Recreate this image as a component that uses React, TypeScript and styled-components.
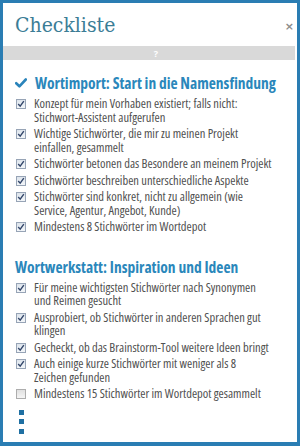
import React from "react";
import styled, { createGlobalStyle } from "styled-components";

const GlobalStyle = createGlobalStyle`
  html, body { margin: 0; padding: 0; background: #ffffff; }
  * { box-sizing: border-box; }
`;

const Frame = styled.div`
  width: 300px;
  height: 446px;
  border: 3px solid #2a7db3;
  border-bottom-width: 4px;
  background: #ffffff;
  display: flex;
  flex-direction: column;
  overflow: hidden;
`;

const Header = styled.header`
  height: 43px;
  display: flex;
  align-items: center;
  justify-content: space-between;
  padding: 0 3px 0 12px;
`;

const Title = styled.h1`
  margin: 0;
  font-family: "DejaVu Serif", "Liberation Serif", serif;
  font-stretch: condensed;
  font-weight: normal;
  font-size: 21px;
  color: #3b7d96;
  line-height: 24px;
`;

const Close = styled.span`
  font-family: "DejaVu Sans", sans-serif;
  font-weight: bold;
  font-size: 11px;
  color: #8c8c8c;
  line-height: 11px;
  margin-top: 3px;
`;

const HelpBar = styled.div`
  height: 14px;
  margin-right: 2px;
  padding-left: 14px;
  background: #d9d9d9;
  display: flex;
  align-items: center;
  justify-content: center;
  color: #ffffff;
  font-family: "Open Sans", sans-serif;
  font-weight: bold;
  font-size: 9px;
`;

const Content = styled.div`
  padding: 13px 0 0 12px;
  display: flex;
  flex-direction: column;
`;

const Section = styled.section<{ $first?: boolean }>`
  margin-top: ${(p) => (p.$first ? "0" : "23px")};
  display: flex;
  flex-direction: column;
  gap: 4px;
`;

const Heading = styled.h2`
  margin: 0;
  height: 20px;
  display: flex;
  align-items: center;
  gap: 8px;
  font-family: "Open Sans", sans-serif;
  font-stretch: 86%;
  font-weight: bold;
  font-size: 15.5px;
  color: #2a87bb;
  white-space: nowrap;
`;

const List = styled.ul`
  margin: 0;
  padding: 0 0 0 1px;
  list-style: none;
  display: flex;
  flex-direction: column;
  gap: 3px;
`;

const Item = styled.li`
  display: flex;
  align-items: flex-start;
  gap: 8px;
  font-family: "Open Sans", sans-serif;
  font-stretch: 87%;
  font-size: 12.5px;
  line-height: 13.5px;
  color: #505050;
  white-space: nowrap;
`;

const Box = styled.span<{ $checked: boolean }>`
  flex: none;
  width: 10px;
  height: 10px;
  margin-top: 2px;
  border: 1px solid ${(p) => (p.$checked ? "#97a4b6" : "#adadad")};
  background: ${(p) =>
    p.$checked
      ? "linear-gradient(#dde4ec, #f3f6f9)"
      : "linear-gradient(#e0e0e0, #f5f5f5)"};
  display: flex;
  align-items: center;
  justify-content: center;
`;

const Dots = styled.div`
  margin: 9px 0 0 4px;
  display: flex;
  flex-direction: column;
  gap: 4.5px;
`;

const Dot = styled.span`
  width: 5px;
  height: 5px;
  background: #1f70a3;
`;

const Tick = () => (
  <svg width="8" height="8" viewBox="0 0 8 8">
    <path d="M1.2 4 L3.2 6.2 L6.8 1.2" fill="none" stroke="#33466a" strokeWidth="1.4" />
  </svg>
);

const HeadCheck = () => (
  <svg width="12" height="10" viewBox="0 0 12 10">
    <path d="M1.2 5.2 L4.4 8.3 L10.8 1.5" fill="none" stroke="#2a84bb" strokeWidth="2.6" strokeLinecap="round" strokeLinejoin="round" />
  </svg>
);

type Entry = { lines: string[]; checked: boolean };

const sections: { title: string; done: boolean; items: Entry[] }[] = [
  {
    title: "Wortimport: Start in die Namensfindung",
    done: true,
    items: [
      { lines: ["Konzept für mein Vorhaben existiert; falls nicht:", "Stichwort-Assistent aufgerufen"], checked: true },
      { lines: ["Wichtige Stichwörter, die mir zu meinen Projekt", "einfallen, gesammelt"], checked: true },
      { lines: ["Stichwörter betonen das Besondere an meinem Projekt"], checked: true },
      { lines: ["Stichwörter beschreiben unterschiedliche Aspekte"], checked: true },
      { lines: ["Stichwörter sind konkret, nicht zu allgemein (wie", "Service, Agentur, Angebot, Kunde)"], checked: true },
      { lines: ["Mindestens 8 Stichwörter im Wortdepot"], checked: true },
    ],
  },
  {
    title: "Wortwerkstatt: Inspiration und Ideen",
    done: false,
    items: [
      { lines: ["Für meine wichtigsten Stichwörter nach Synonymen", "und Reimen gesucht"], checked: true },
      { lines: ["Ausprobiert, ob Stichwörter in anderen Sprachen gut", "klingen"], checked: true },
      { lines: ["Gecheckt, ob das Brainstorm-Tool weitere Ideen bringt"], checked: true },
      { lines: ["Auch einige kurze Stichwörter mit weniger als 8", "Zeichen gefunden"], checked: true },
      { lines: ["Mindestens 15 Stichwörter im Wortdepot gesammelt"], checked: false },
    ],
  },
];

export default function App() {
  return (
    <Frame>
      <GlobalStyle />
      <Header>
        <Title>Checkliste</Title>
        <Close>×</Close>
      </Header>
      <HelpBar>?</HelpBar>
      <Content>
        {sections.map((s, si) => (
          <Section key={s.title} $first={si === 0}>
            <Heading>
              {s.done && <HeadCheck />}
              {s.title}
            </Heading>
            <List>
              {s.items.map((it, i) => (
                <Item key={i}>
                  <Box $checked={it.checked}>{it.checked && <Tick />}</Box>
                  <span>
                    {it.lines.map((l, li) => (
                      <React.Fragment key={li}>
                        {li > 0 && <br />}
                        {l}
                      </React.Fragment>
                    ))}
                  </span>
                </Item>
              ))}
            </List>
          </Section>
        ))}
        <Dots>
          <Dot />
          <Dot />
          <Dot />
        </Dots>
      </Content>
    </Frame>
  );
}
